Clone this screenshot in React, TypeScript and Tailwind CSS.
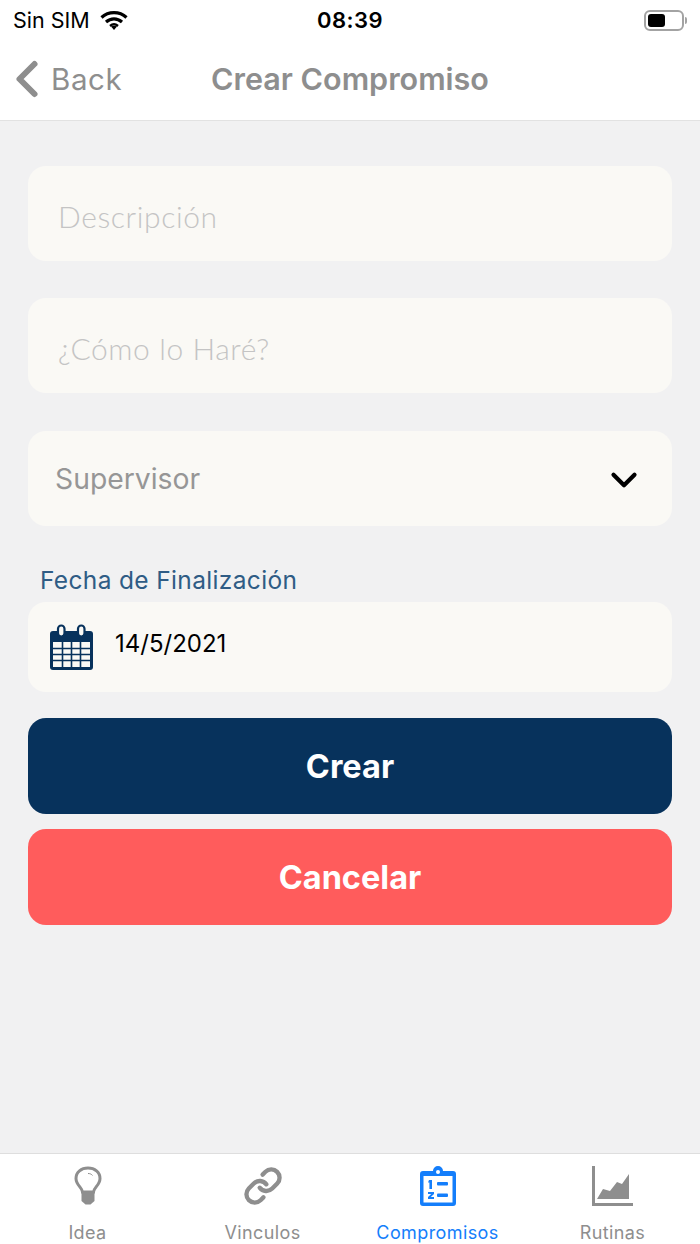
import { ChevronDown, ChevronLeft, Link } from "lucide-react";
import type { ReactNode } from "react";

const sans = "font-['Inter','Liberation_Sans',sans-serif]";

function WifiIcon() {
  return (
    <svg width="28" height="20" viewBox="0 0 28 20" fill="none" stroke="#000" strokeWidth="3.2">
      <path d="M1.5 7.5C8.5 1 19.5 1 26.5 7.5" />
      <path d="M6 12C10.8 7.8 17.2 7.8 22 12" />
      <path d="M10 16C12.4 14 15.6 14 18 16" strokeWidth="2.4" />
      <path d="M14 20l-3-3.4c1.8-1.2 4.2-1.2 6 0z" fill="#000" stroke="none" />
    </svg>
  );
}

function BatteryIcon() {
  return (
    <div className="flex items-center gap-[1px]">
      <div className="flex h-[21px] w-[40px] items-center rounded-[6px] border-2 border-[#a3a3a3] px-[2px]">
        <div className="h-[13px] w-[17px] rounded-[3px] bg-black" />
      </div>
      <div className="h-[7px] w-[2px] rounded-r-full bg-[#a3a3a3]" />
    </div>
  );
}

function CalendarIcon() {
  return (
    <svg width="43" height="46" viewBox="0 0 43 46" fill="none">
      <path d="M3 7h37a3 3 0 0 1 3 3v33a3 3 0 0 1-3 3H3a3 3 0 0 1-3-3V10a3 3 0 0 1 3-3z" fill="#07325c" />
      <rect x="3" y="18" width="37" height="25" fill="#faf9f5" />
      <path
        d="M3 24.500h37M3 30.500h37M3 36.500h37M12.500 18v25M21.500 18v25M30.500 18v25"
        stroke="#07325c"
        strokeWidth="1.6"
      />
      <rect x="8" y="1.500" width="6.500" height="11" rx="3.200" fill="#faf9f5" stroke="#07325c" strokeWidth="2.200" />
      <rect x="28" y="1.500" width="6.500" height="11" rx="3.200" fill="#faf9f5" stroke="#07325c" strokeWidth="2.200" />
    </svg>
  );
}

function BulbIcon() {
  return (
    <svg width="28" height="40" viewBox="0 0 28 40" fill="none">
      <path
        d="M8.500 26c0-4-6.500-7-6.500-13.500C2 6 7.300 2 14 2s12 4 12 10.500C26 19 19.500 22 19.500 26z"
        stroke="#8e8e8e"
        strokeWidth="3"
      />
      <path d="M7.500 27h13v8l-4 3.500h-5l-4-3.500z" fill="#8e8e8e" />
      <path d="M14 7.500c2 0 3.500.6 4.500 2" stroke="#8e8e8e" strokeWidth="1" />
    </svg>
  );
}

function ClipboardIcon() {
  return (
    <svg width="36" height="40" viewBox="0 0 36 40" fill="none">
      <path
        d="M3 5h10a5 5 0 0 1 10 0h10a3 3 0 0 1 3 3v29a3 3 0 0 1-3 3H3a3 3 0 0 1-3-3V8a3 3 0 0 1 3-3z"
        fill="#147efb"
      />
      <circle cx="18" cy="6" r="2" fill="#fff" />
      <rect x="3.500" y="10" width="29" height="26.500" fill="#fff" />
      <path d="M9 14h3v9h-2.600v-6.600H8z" fill="#147efb" />
      <path d="M8 26h6v2l-3.200 3H14v2H8v-2l3.200-3H8z" fill="#147efb" />
      <rect x="17" y="16" width="11" height="3.500" rx="1" fill="#147efb" />
      <rect x="17" y="27.500" width="11" height="3.500" rx="1" fill="#147efb" />
    </svg>
  );
}

function ChartIcon() {
  return (
    <svg width="42" height="41" viewBox="0 0 42 41" fill="none">
      <path d="M1.500 0v38.500H41" stroke="#8e8e8e" strokeWidth="3" />
      <path d="M5 33l6-10 7 2 7-9 5 2 7-10v25z" fill="#8e8e8e" />
    </svg>
  );
}

function TextField({ label }: { label: string }) {
  return (
    <div className="flex h-[95px] items-center rounded-[18px] bg-[#faf9f5] pl-[30px] pt-[6px] font-['Lato',sans-serif] text-[30px] font-light tracking-[0.6px] text-[#c4c4c4]">
      {label}
    </div>
  );
}

function TabItem({ icon, label, active }: { icon: ReactNode; label: string; active?: boolean }) {
  return (
    <div className="flex flex-col items-center">
      <div className="flex h-[42px] items-center">{icon}</div>
      <span className={`mt-[15px] text-[18px] leading-[22px] tracking-[0.4px] ${active ? "text-[#147efb]" : "text-[#8e8e8e]"}`}>
        {label}
      </span>
    </div>
  );
}

export default function App() {
  return (
    <div className={`flex h-[1244px] w-[700px] flex-col overflow-hidden bg-[#f1f1f2] ${sans}`}>
      <header className="h-[121px] shrink-0 border-b border-[#e2e2e2] bg-white">
        <div className="grid h-[40px] grid-cols-[1fr_auto_1fr] items-center px-[13px]">
          <div className="flex items-center gap-[10px] text-[21.5px] text-black">
            Sin SIM
            <WifiIcon />
          </div>
          <div className="text-[22px] font-semibold tracking-[0.5px] text-black">08:39</div>
          <div className="flex justify-end">
            <BatteryIcon />
          </div>
        </div>
        <div className="grid h-[78px] grid-cols-[1fr_auto_1fr] items-center">
          <div className="flex items-center text-[29.5px] text-[#8e8e8e]">
            <ChevronLeft className="-ml-[3px] h-[60px] w-[60px]" strokeWidth={2.4} />
            <span className="-ml-[6px] tracking-[0.6px]">Back</span>
          </div>
          <div className="text-[30.5px] font-semibold text-[#8e8e8e]">Crear Compromiso</div>
          <div />
        </div>
      </header>

      <main className="flex-1 px-[28px] pt-[45px]">
        <div className="flex flex-col">
          <TextField label="Descripción" />
          <div className="mt-[37px]">
            <TextField label="¿Cómo lo Haré?" />
          </div>
          <div className="mt-[38px] flex h-[95px] items-center justify-between rounded-[18px] bg-[#faf9f5] pl-[27px] pr-[27px] pt-[2px] text-[28.3px] text-[#969696]">
            Supervisor
            <ChevronDown className="h-[42px] w-[42px] text-black" strokeWidth={2.4} />
          </div>
        </div>

        <div className="mt-[40px] pl-[12px] text-[24.5px] leading-[28px] tracking-[0.35px] text-[#2f5c85]">
          Fecha de Finalización
        </div>
        <div className="mt-[8px] flex h-[90px] items-center rounded-[18px] bg-[#faf9f5] pl-[22px]">
          <CalendarIcon />
          <span className="mb-[6px] ml-[22px] text-[24px] text-black">14/5/2021</span>
        </div>

        <div className="mt-[26px] flex flex-col gap-[15px]">
          <button className="h-[96px] rounded-[18px] bg-[#07325c] pt-[2px] text-[32.5px] font-bold text-white">Crear</button>
          <button className="h-[96px] rounded-[18px] bg-[#ff5c5c] pt-[2px] text-[32.5px] font-bold text-white">Cancelar</button>
        </div>
      </main>

      <nav className="grid h-[91px] shrink-0 grid-cols-4 border-t border-[#dedede] bg-white pt-[11px]">
        <TabItem icon={<BulbIcon />} label="Idea" />
        <TabItem icon={<Link className="h-[40px] w-[40px] text-[#8e8e8e]" strokeWidth={2.6} />} label="Vinculos" />
        <TabItem icon={<ClipboardIcon />} label="Compromisos" active />
        <TabItem icon={<ChartIcon />} label="Rutinas" />
      </nav>
    </div>
  );
}
